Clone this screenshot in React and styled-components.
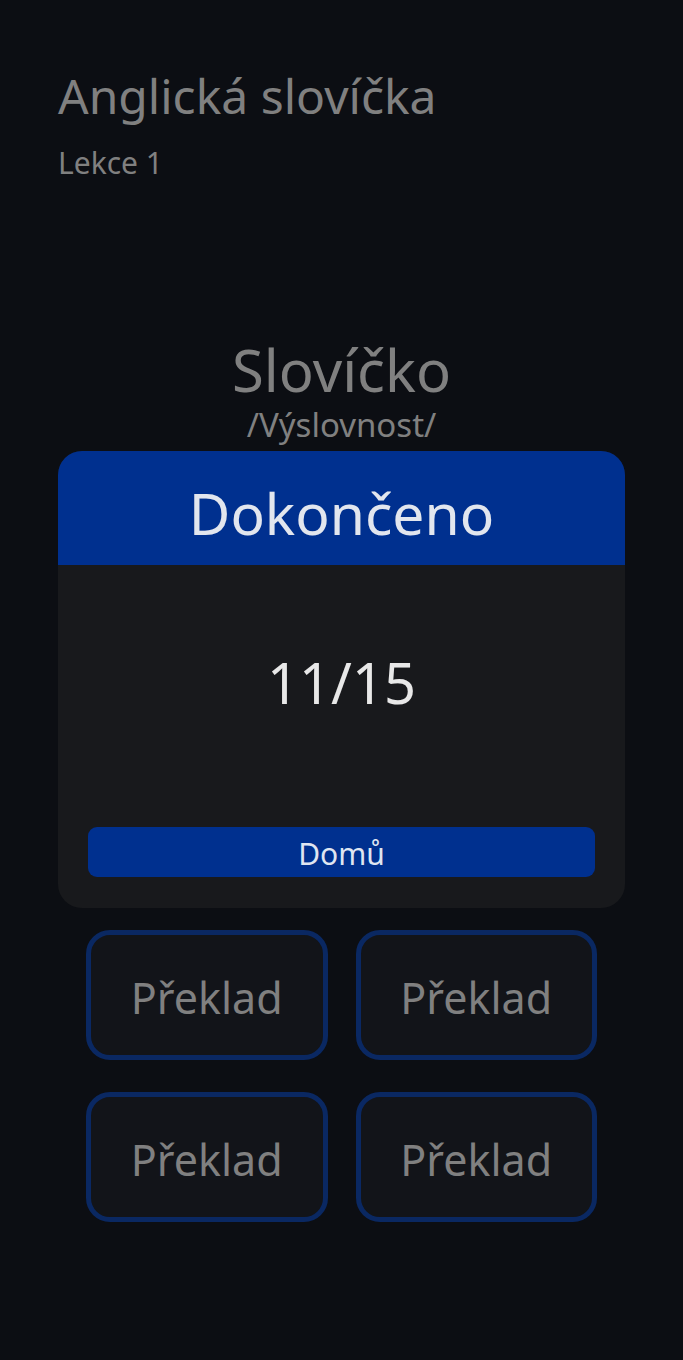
import React from "react";
import styled, { createGlobalStyle } from "styled-components";

const Global = createGlobalStyle`
  html, body { margin: 0; padding: 0; background: #0c0e13; }
  body { font-family: "Noto Sans", "Open Sans", sans-serif; }
`;

const Page = styled.div`
  min-height: 1360px;
  box-sizing: border-box;
  padding: 66px 58px 0;
  display: flex;
  flex-direction: column;
`;

const Header = styled.header`
  display: flex;
  flex-direction: column;
  gap: 20px;
`;

const Title = styled.h1`
  margin: 0;
  font-size: 48px;
  line-height: 60px;
  font-weight: 400;
  color: #808080;
`;

const Subtitle = styled.div`
  font-size: 30px;
  line-height: 34px;
  color: #808080;
`;

const WordBlock = styled.section`
  margin-top: 157px;
  display: flex;
  flex-direction: column;
  align-items: center;
  gap: 2px;
`;

const Word = styled.div`
  font-size: 58px;
  line-height: 66px;
  color: #808080;
`;

const Pron = styled.div`
  font-size: 33px;
  line-height: 40px;
  color: #808080;
`;

const Card = styled.div`
  margin-top: 6px;
  background: #18191c;
  border-radius: 24px;
  overflow: hidden;
  display: flex;
  flex-direction: column;
`;

const CardHeader = styled.div`
  background: #00308f;
  height: 114px;
  box-sizing: border-box;
  padding-top: 9px;
  display: flex;
  align-items: center;
  justify-content: center;
  font-size: 57px;
  color: #e2e6ee;
`;

const Score = styled.div`
  height: 234px;
  display: flex;
  align-items: center;
  justify-content: center;
  font-size: 56px;
  color: #e8e8e8;
`;

const HomeButton = styled.button`
  margin: 28px 30px 31px;
  height: 50px;
  border: none;
  border-radius: 9px;
  background: #00308f;
  color: #dfe5f1;
  font-family: inherit;
  font-size: 30px;
  padding: 3px 0 0;
`;

const Options = styled.div`
  margin: 22px 28px 0;
  display: grid;
  grid-template-columns: 1fr 1fr;
  column-gap: 28px;
  row-gap: 32px;
`;

const Option = styled.button`
  height: 130px;
  box-sizing: border-box;
  border: 5px solid #0a2862;
  border-radius: 24px;
  background: #121419;
  color: #808080;
  font-family: inherit;
  font-size: 43px;
  padding: 5px 0 0;
`;

export default function App() {
  return (
    <>
      <Global />
      <Page>
        <Header>
          <Title>Anglická slovíčka</Title>
          <Subtitle>Lekce 1</Subtitle>
        </Header>
        <WordBlock>
          <Word>Slovíčko</Word>
          <Pron>/Výslovnost/</Pron>
        </WordBlock>
        <Card>
          <CardHeader>Dokončeno</CardHeader>
          <Score>11/15</Score>
          <HomeButton>Domů</HomeButton>
        </Card>
        <Options>
          {[0, 1, 2, 3].map((i) => (
            <Option key={i}>Překlad</Option>
          ))}
        </Options>
      </Page>
    </>
  );
}
